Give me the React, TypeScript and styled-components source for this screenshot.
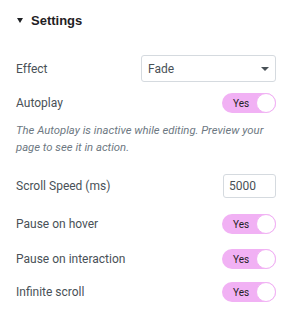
import React from "react";
import styled, { createGlobalStyle } from "styled-components";

const Global = createGlobalStyle`
  html, body { margin: 0; padding: 0; background: #fff; }
  body { font-family: Roboto, "Liberation Sans", sans-serif; }
`;

const Panel = styled.div`
  width: 293px;
  padding: 12px 17px 0 16px;
  box-sizing: border-box;
  display: flex;
  flex-direction: column;
`;

const Header = styled.div`
  display: flex;
  align-items: center;
  gap: 8px;
  height: 17px;
  font-family: "Liberation Sans", Arial, sans-serif;
  font-weight: 700;
  font-size: 13px;
  color: #1f2124;
  margin-bottom: 26px;
`;

const Caret = styled.span`
  width: 0;
  height: 0;
  margin-left: 1px;
  border-left: 3.5px solid transparent;
  border-right: 3.5px solid transparent;
  border-top: 5px solid #1f2124;
`;

const Row = styled.div<{ $h: number; $mb?: number }>`
  display: flex;
  align-items: center;
  justify-content: space-between;
  height: ${(p) => p.$h}px;
  margin-bottom: ${(p) => p.$mb ?? 0}px;
`;

const Label = styled.span`
  font-size: 12px;
  color: #495157;
`;

const Select = styled.div`
  width: 135px;
  height: 27px;
  box-sizing: border-box;
  border: 1px solid #d5dadf;
  border-radius: 3px;
  display: flex;
  align-items: center;
  justify-content: space-between;
  padding: 0 6px 0 6px;
  font-size: 12px;
  color: #495157;
`;

const Arrow = styled.span`
  width: 0;
  height: 0;
  border-left: 4.5px solid transparent;
  border-right: 4.5px solid transparent;
  border-top: 4.5px solid #495157;
`;

const Toggle = styled.div`
  position: relative;
  width: 54px;
  height: 20px;
  border-radius: 10px;
  background: #f1b1f4;
  box-sizing: border-box;
  display: flex;
  align-items: center;
`;

const ToggleText = styled.span`
  font-size: 10px;
  color: #1f2124;
  padding-left: 11px;
`;

const Knob = styled.span`
  position: absolute;
  right: 0;
  top: 0;
  width: 20px;
  height: 20px;
  box-sizing: border-box;
  border-radius: 50%;
  background: #fff;
  border: 1px solid #f1b1f4;
`;

const Note = styled.p`
  margin: 0 0 18px 0;
  font-size: 11.3px;
  font-style: italic;
  line-height: 17px;
  color: #6d7882;
`;

const NumInput = styled.div`
  width: 53px;
  height: 24px;
  box-sizing: border-box;
  border: 1px solid #d5dadf;
  border-radius: 3px;
  display: flex;
  align-items: center;
  padding-left: 5px;
  font-size: 12px;
  color: #495157;
`;

const Switch = () => (
  <Toggle>
    <ToggleText>Yes</ToggleText>
    <Knob />
  </Toggle>
);

export default function App() {
  return (
    <>
      <Global />
      <Panel>
        <Header>
          <Caret />
          Settings
        </Header>
        <Row $h={27} $mb={11}>
          <Label>Effect</Label>
          <Select>
            Fade
            <Arrow />
          </Select>
        </Row>
        <Row $h={20} $mb={9}>
          <Label>Autoplay</Label>
          <Switch />
        </Row>
        <Note>
          The Autoplay is inactive while editing. Preview your page to see it in action.
        </Note>
        <Row $h={24} $mb={16}>
          <Label>Scroll Speed (ms)</Label>
          <NumInput>5000</NumInput>
        </Row>
        <Row $h={20} $mb={15}>
          <Label>Pause on hover</Label>
          <Switch />
        </Row>
        <Row $h={20} $mb={13}>
          <Label>Pause on interaction</Label>
          <Switch />
        </Row>
        <Row $h={20}>
          <Label>Infinite scroll</Label>
          <Switch />
        </Row>
      </Panel>
    </>
  );
}
